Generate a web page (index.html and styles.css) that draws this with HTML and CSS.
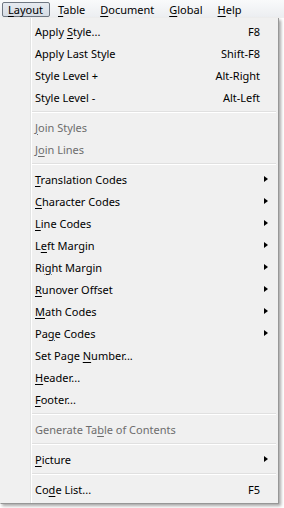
FILE: index.html
```html
<!DOCTYPE html>
<html lang="en">
<head>
    <meta charset="UTF-8">
    <meta name="viewport" content="width=device-width, initial-scale=1.0">
    <title>Layout Menu</title>
    <link rel="stylesheet" href="styles.css">
</head>
<body>

<div class="menubar">
    <span class="bar-item active"><u>L</u>ayout</span>
    <span class="bar-item"><u>T</u>able</span>
    <span class="bar-item"><u>D</u>ocument</span>
    <span class="bar-item"><u>G</u>lobal</span>
    <span class="bar-item"><u>H</u>elp</span>
</div>

<div class="menu">
    <div class="item"><span class="label">Apply <u>S</u>tyle...</span><span class="key">F8</span></div>
    <div class="item"><span class="label">Apply Last Style</span><span class="key">Shift-F8</span></div>
    <div class="item"><span class="label">Style Level +</span><span class="key">Alt-Right</span></div>
    <div class="item"><span class="label">Style Level -</span><span class="key">Alt-Left</span></div>
    <div class="sep"></div>
    <div class="item disabled"><span class="label"><u>J</u>oin Styles</span></div>
    <div class="item disabled"><span class="label">J<u>o</u>in Lines</span></div>
    <div class="sep"></div>
    <div class="item sub"><span class="label"><u>T</u>ranslation Codes</span></div>
    <div class="item sub"><span class="label"><u>C</u>haracter Codes</span></div>
    <div class="item sub"><span class="label"><u>L</u>ine Codes</span></div>
    <div class="item sub"><span class="label">L<u>e</u>ft Margin</span></div>
    <div class="item sub"><span class="label">Ri<u>g</u>ht Margin</span></div>
    <div class="item sub"><span class="label"><u>R</u>unover Offset</span></div>
    <div class="item sub"><span class="label"><u>M</u>ath Codes</span></div>
    <div class="item sub"><span class="label">Pa<u>g</u>e Codes</span></div>
    <div class="item"><span class="label">Set Page <u>N</u>umber...</span></div>
    <div class="item"><span class="label"><u>H</u>eader...</span></div>
    <div class="item"><span class="label"><u>F</u>ooter...</span></div>
    <div class="sep"></div>
    <div class="item disabled"><span class="label">Generate Ta<u>b</u>le of Contents</span></div>
    <div class="sep"></div>
    <div class="item sub"><span class="label"><u>P</u>icture</span></div>
    <div class="sep"></div>
    <div class="item"><span class="label">Co<u>d</u>e List...</span><span class="key">F5</span></div>
</div>

</body>
</html>
```

FILE: styles.css
```css
body {
    margin: 0;
    width: 284px;
    height: 508px;
    background-color: #ffffff;
    font-family: 'Noto Sans', 'Open Sans', sans-serif;
    font-size: 11px;
    color: #000;
    overflow: hidden;
}

u {
    text-decoration-thickness: 1px;
    text-underline-offset: 2px;
}

.menubar {
    display: flex;
    height: 18px;
    padding: 2px 0 0 2px;
    box-sizing: border-box;
    background: linear-gradient(#f9fafb, #eceef1);
    border-bottom: 1px solid #f0f0f0;
}

.bar-item {
    height: 15px;
    line-height: 14px;
    padding: 0 6px 0 5px;
    margin-right: 2px;
    border: 1px solid transparent;
    box-sizing: border-box;
}

.bar-item.active {
    background: linear-gradient(#e6eaf0, #d6dce4);
    border-color: #6f7782;
    border-radius: 2px;
}

.menu {
    position: relative;
    width: 279px;
    height: 486px;
    padding: 2px 0;
    box-sizing: border-box;
    background-color: #f0f0f0;
    border: 1px solid #979797;
    border-left-color: #f0f0f0;
    border-top: none;
    box-shadow: 2px 2px 3px rgba(0, 0, 0, 0.35);
}

/* gutter line */
.menu::before {
    content: '';
    position: absolute;
    top: 0;
    bottom: 0;
    left: 29px;
    width: 1px;
    background-color: #e2e3e3;
    border-right: 1px solid #ffffff;
}

.item {
    display: flex;
    align-items: center;
    height: 22px;
    padding: 0 18px 0 34px;
}

.label {
    flex: 1;
}

.key {
    text-align: right;
}

.disabled {
    color: #6d6d6d;
}

.sub {
    position: relative;
}

.sub::after {
    content: '';
    position: absolute;
    right: 10px;
    top: 8px;
    border-left: 4px solid #000;
    border-top: 3.5px solid transparent;
    border-bottom: 3.5px solid transparent;
}

.sep {
    height: 1px;
    margin: 3px 2px 3px 31px;
    background-color: #e0e0e0;
    border-bottom: 1px solid #ffffff;
}
```
